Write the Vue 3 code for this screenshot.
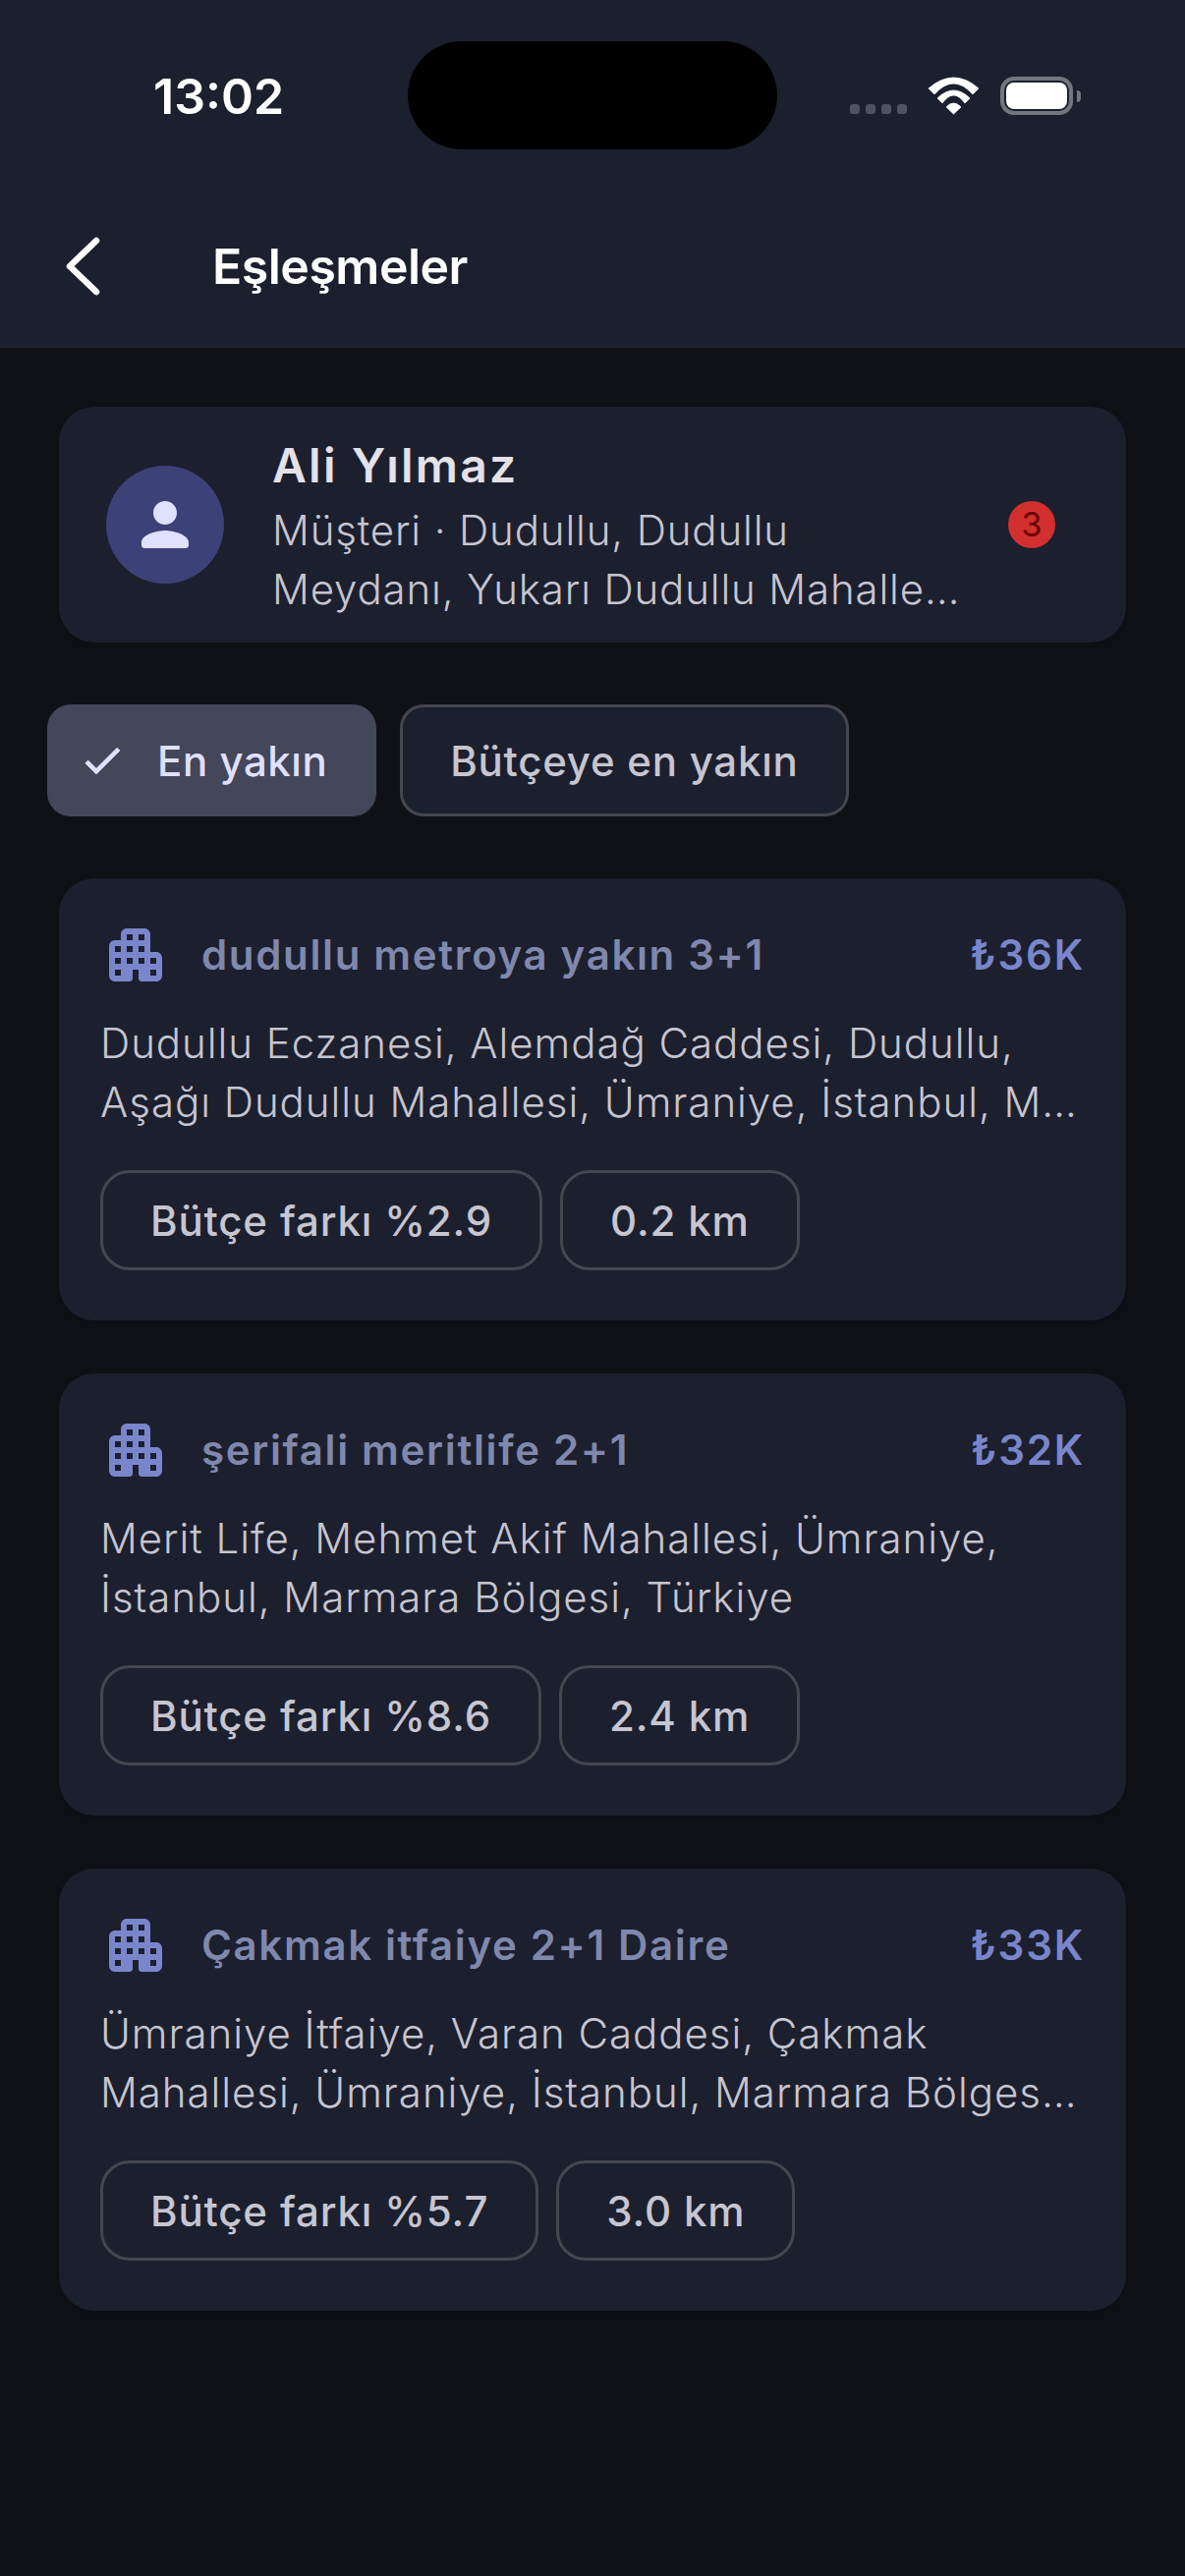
<template>
  <div class="screen">
    <header class="top">
      <div class="status">
        <span class="time">13:02</span>
        <div class="island"></div>
        <div class="status-icons">
          <div class="dots"><i v-for="n in 4" :key="n"></i></div>
          <svg class="wifi" viewBox="0 0 51 37" width="51" height="37" fill="#fff" stroke="#fff" stroke-width="0.8" stroke-linejoin="round">
            <path d="M0 11 Q25.5 -11 51 11 L45 17 Q25.5 -5 6 17 Z"/>
            <path d="M9 21 Q25.5 5 42 21 L37 26 Q25.5 10 14 26 Z"/>
            <path d="M18 30 Q25.5 22 33 30 L25.5 37 Z"/>
          </svg>
          <div class="battery"><div class="battery-fill"></div></div>
          <div class="nib"></div>
        </div>
      </div>
      <div class="nav">
        <svg class="back" viewBox="0 0 36 60" width="36" height="60" fill="none" stroke="#fff" stroke-width="6.5" stroke-linecap="round" stroke-linejoin="round">
          <path d="M32 4 L5 30 L32 56" />
        </svg>
        <span class="title">Eşleşmeler</span>
      </div>
    </header>

    <main class="body">
      <section class="profile">
        <div class="avatar">
          <svg viewBox="0 0 24 24" width="72" height="72" fill="#e0e0ff">
            <path d="M12 12c2.21 0 4-1.79 4-4s-1.79-4-4-4-4 1.79-4 4 1.79 4 4 4zm0 2c-2.67 0-8 1.34-8 4v1c0 .55.45 1 1 1h14c.55 0 1-.45 1-1v-1c0-2.66-5.33-4-8-4z"/>
          </svg>
        </div>
        <div class="profile-text">
          <div class="name">Ali Yılmaz</div>
          <div class="sub">Müşteri · Dudullu, Dudullu</div>
          <div class="sub">Meydanı, Yukarı Dudullu Mahalle…</div>
        </div>
        <span class="badge">3</span>
      </section>

      <div class="filters">
        <button class="filter active">
          <svg viewBox="0 0 24 24" width="48" height="48" fill="#e0e0ff" stroke="#e0e0ff" stroke-width="0.4"><path d="M9 16.17L4.83 12l-1.42 1.41L9 19 21 7l-1.41-1.41z"/></svg>
          <span>En yakın</span>
        </button>
        <button class="filter">Bütçeye en yakın</button>
      </div>

      <article class="match" v-for="m in matches" :key="m.title">
        <div class="match-head">
          <svg viewBox="0 0 24 24" width="72" height="72" fill="#7986cb" fill-rule="evenodd">
            <path d="M17 11V5c0-1.1-.9-2-2-2H9c-1.1 0-2 .9-2 2v2H5c-1.1 0-2 .9-2 2v10c0 1.1.9 2 2 2h5c.55 0 1-.45 1-1v-3h2v3c0 .55.45 1 1 1h5c1.1 0 2-.9 2-2v-6c0-1.1-.9-2-2-2h-2zM7 19H5v-2h2v2zm0-4H5v-2h2v2zm0-4H5V9h2v2zm4 4H9v-2h2v2zm0-4H9V9h2v2zm0-4H9V5h2v2zm4 8h-2v-2h2v2zm0-4h-2V9h2v2zm0-4h-2V5h2v2zm4 12h-2v-2h2v2zm0-4h-2v-2h2v2z"/>
          </svg>
          <span class="match-title">{{ m.title }}</span>
          <span class="price">{{ m.price }}</span>
        </div>
        <p class="address">{{ m.address }}</p>
        <div class="tags">
          <span class="tag">{{ m.budget }}</span>
          <span class="tag">{{ m.distance }}</span>
        </div>
      </article>
    </main>
  </div>
</template>

<script setup>
const matches = [
  { title: 'dudullu metroya yakın 3+1', price: '₺36K', address: 'Dudullu Eczanesi, Alemdağ Caddesi, Dudullu, Aşağı Dudullu Mahallesi, Ümraniye, İstanbul, M…', budget: 'Bütçe farkı %2.9', distance: '0.2 km' },
  { title: 'şerifali meritlife 2+1', price: '₺32K', address: 'Merit Life, Mehmet Akif Mahallesi, Ümraniye, İstanbul, Marmara Bölgesi, Türkiye', budget: 'Bütçe farkı %8.6', distance: '2.4 km' },
  { title: 'Çakmak itfaiye 2+1 Daire', price: '₺33K', address: 'Ümraniye İtfaiye, Varan Caddesi, Çakmak Mahallesi, Ümraniye, İstanbul, Marmara Bölges…', budget: 'Bütçe farkı %5.7', distance: '3.0 km' },
]
</script>

<style>
html, body { margin: 0; background: #101116; }
</style>

<style scoped>
.screen { width: 1206px; min-height: 2622px; background: #101116; font-family: Inter, "Noto Sans", sans-serif; color: #e4e1e9; }
.top { background: #1c1f2e; height: 354px; }
.status { position: relative; display: flex; justify-content: space-between; height: 187px; padding: 0 106px 0 156px; box-sizing: border-box; }
.time { margin-top: 68px; font-size: 50px; line-height: 60px; font-weight: 600; color: #fff; }
.island { position: absolute; left: 415px; top: 42px; width: 376px; height: 110px; background: #000; border-radius: 55px; }
.status-icons { display: flex; align-items: flex-start; margin-top: 78px; }
.dots { display: flex; gap: 6px; margin-top: 28px; }
.dots i { display: block; width: 10px; height: 10px; border-radius: 3px; background: #4f5260; }
.wifi { margin: 1px 22px 0 22px; overflow: visible; }
.battery { width: 74px; height: 39px; box-sizing: border-box; border: 4px solid #74767f; border-radius: 14px; padding: 2px; }
.battery-fill { width: 100%; height: 100%; background: #fff; border-radius: 8px; }
.nib { width: 4px; height: 12px; margin: 14px 0 0 4px; background: #74767f; border-radius: 0 4px 4px 0; }
.nav { display: flex; align-items: center; height: 167px; padding-left: 66px; }
.back { flex: none; }
.title { margin-left: 114px; font-size: 50px; font-weight: 600; color: #fff; letter-spacing: -0.5px; }

.body { display: flex; flex-direction: column; gap: 54px; padding: 60px; }
.profile { display: flex; align-items: center; height: 240px; box-sizing: border-box; padding: 0 72px 0 48px; background: #1c1f2e; border-radius: 36px; box-shadow: 0 3px 9px rgba(0,0,0,0.2); }
.avatar { flex: none; width: 120px; height: 120px; display: flex; align-items: center; justify-content: center; border-radius: 50%; background: #3c4178; }
.profile-text { flex: none; width: 704px; margin-left: 49px; }
.name { font-size: 48px; line-height: 72px; font-weight: 600; letter-spacing: 2.2px; color: #e4e1e9; }
.sub { font-size: 42px; line-height: 60px; font-weight: 300; letter-spacing: 0.85px; color: #c6c5d0; white-space: nowrap; }
.badge { flex: none; margin-left: auto; width: 48px; height: 48px; border-radius: 50%; background: #d32f2f; color: #690005; font-size: 34px; line-height: 48px; text-align: center; }

.filters { display: flex; gap: 24px; margin: 9px 0 9px -12px; }
.filter { display: flex; align-items: center; height: 114px; box-sizing: border-box; padding: 0 48px; border: 3px solid #46464f; border-radius: 24px; background: #1c1f2e; color: #c6c5d0; font-family: inherit; font-size: 42px; font-weight: 500; letter-spacing: 0.75px; }
.filter.active { padding: 0 50px 0 32px; gap: 32px; border: none; background: #44465a; color: #e0e0ff; letter-spacing: 0.55px; }

.match { height: 450px; box-sizing: border-box; padding: 42px; background: #1c1f2e; border-radius: 36px; box-shadow: 0 3px 9px rgba(0,0,0,0.2); }
.match-head { display: flex; align-items: center; height: 72px; }
.match-title { flex: 1; margin: -2px 0 0 31px; font-size: 42px; font-weight: 600; letter-spacing: 1.65px; color: #7f88ad; }
.price { margin-top: -2px; font-size: 42px; font-weight: 600; letter-spacing: 1.8px; color: #7986cb; }
.address { margin: 24px 0 39px; font-size: 42px; line-height: 60px; font-weight: 300; letter-spacing: 0.96px; color: #c6c5d0; }
.tags { display: flex; gap: 18px; }
.tag { display: flex; align-items: center; height: 102px; box-sizing: border-box; padding: 0 48px; border: 3px solid #46464f; border-radius: 30px; font-size: 42px; font-weight: 500; letter-spacing: 0.85px; color: #c6c5d0; }
</style>
